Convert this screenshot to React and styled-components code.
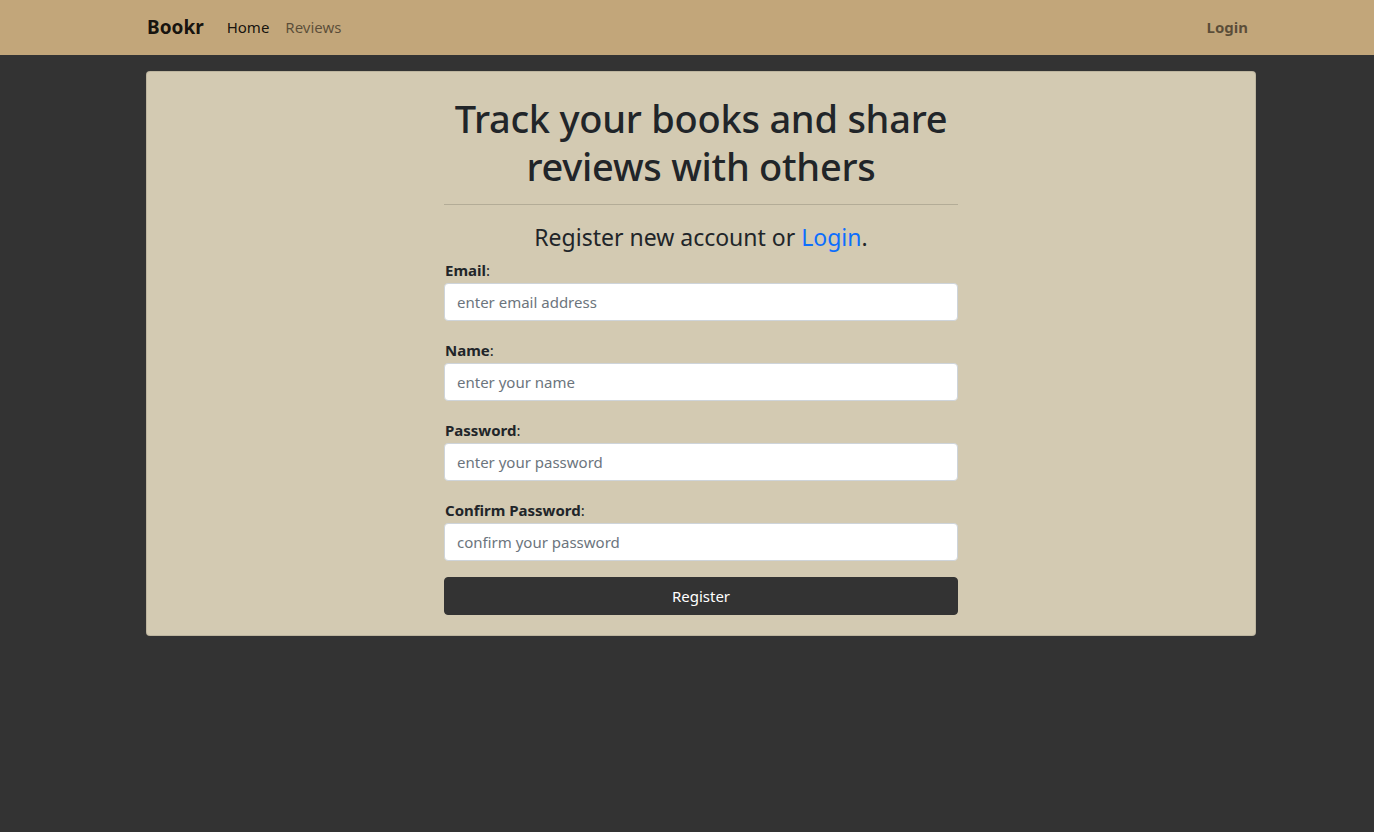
import React from "react";
import styled, { createGlobalStyle } from "styled-components";

const GlobalStyle = createGlobalStyle`
  html, body {
    margin: 0;
    padding: 0;
    background: #333333;
    font-family: "Noto Sans", "Open Sans", sans-serif;
    color: #212529;
  }
  * {
    box-sizing: border-box;
  }
`;

const Navbar = styled.nav`
  height: 55px;
  background: #c2a67a;
`;

const Container = styled.div`
  width: 1110px;
  margin-left: 146px;
`;

const NavInner = styled(Container)`
  height: 100%;
  display: flex;
  align-items: center;
  padding-bottom: 1px;
`;

const Brand = styled.a`
  font-size: 19px;
  font-weight: 700;
  color: rgba(0, 0, 0, 0.9);
  margin-right: 15px;
  margin-left: 1px;
  text-decoration: none;
`;

const NavLinks = styled.div`
  display: flex;
  flex: 1;
`;

const NavLink = styled.a`
  padding: 8px;
  font-size: 15px;
  color: ${(p) => (p.$active ? "rgba(0, 0, 0, 0.9)" : "rgba(0, 0, 0, 0.55)")};
  font-weight: ${(p) => (p.$bold ? 700 : 400)};
  text-decoration: none;
`;

const Card = styled.div`
  margin-top: 16px;
  background: #d3cab2;
  border: 1px solid rgba(0, 0, 0, 0.1);
  border-radius: 4px;
  padding: 22px 16px 20px;
  display: flex;
  justify-content: center;
`;

const Column = styled.div`
  width: 514px;
`;

const Title = styled.h1`
  margin: 0;
  font-size: 38px;
  letter-spacing: -0.25px;
  font-weight: 500;
  line-height: 48px;
  text-align: center;
`;

const Rule = styled.hr`
  margin: 14px 0 18px;
  border: 0;
  border-top: 1px solid rgba(0, 0, 0, 0.15);
`;

const Subtitle = styled.h4`
  margin: 0 0 6px;
  font-size: 23px;
  font-weight: 400;
  line-height: 29px;
  text-align: center;

  a {
    color: #0d6efd;
    text-decoration: none;
  }
`;

const Field = styled.div`
  margin-bottom: 17px;

  &:last-of-type {
    margin-bottom: 16px;
  }
`;

const Label = styled.label`
  display: block;
  font-size: 15px;
  line-height: 24px;
  margin-bottom: 1px;
  padding-left: 1px;

  b {
    font-weight: 700;
  }
`;

const Input = styled.input`
  display: block;
  width: 100%;
  height: 38px;
  padding: 6px 12px;
  font-family: inherit;
  font-size: 15px;
  color: #212529;
  background: #fff;
  border: 1px solid #ced4da;
  border-radius: 4px;

  &::placeholder {
    color: #6c757d;
  }
`;

const Button = styled.button`
  display: block;
  width: 100%;
  height: 38px;
  font-family: inherit;
  font-size: 15px;
  color: #fff;
  background: #333333;
  border: 1px solid #333333;
  border-radius: 4px;
  cursor: pointer;
`;

const fields = [
  { label: "Email", type: "email", placeholder: "enter email address" },
  { label: "Name", type: "text", placeholder: "enter your name" },
  { label: "Password", type: "password", placeholder: "enter your password" },
  { label: "Confirm Password", type: "password", placeholder: "confirm your password" },
];

export default function App() {
  return (
    <>
      <GlobalStyle />
      <Navbar>
        <NavInner>
          <Brand href="#">Bookr</Brand>
          <NavLinks>
            <NavLink href="#" $active>Home</NavLink>
            <NavLink href="#">Reviews</NavLink>
          </NavLinks>
          <NavLink href="#" $bold>Login</NavLink>
        </NavInner>
      </Navbar>
      <Container>
        <Card>
          <Column>
            <Title>Track your books and share reviews with others</Title>
            <Rule />
            <Subtitle>
              Register new account or <a href="#">Login</a>.
            </Subtitle>
            {fields.map((f) => (
              <Field key={f.label}>
                <Label>
                  <b>{f.label}</b>:
                </Label>
                <Input type={f.type} placeholder={f.placeholder} />
              </Field>
            ))}
            <Button>Register</Button>
          </Column>
        </Card>
      </Container>
    </>
  );
}
